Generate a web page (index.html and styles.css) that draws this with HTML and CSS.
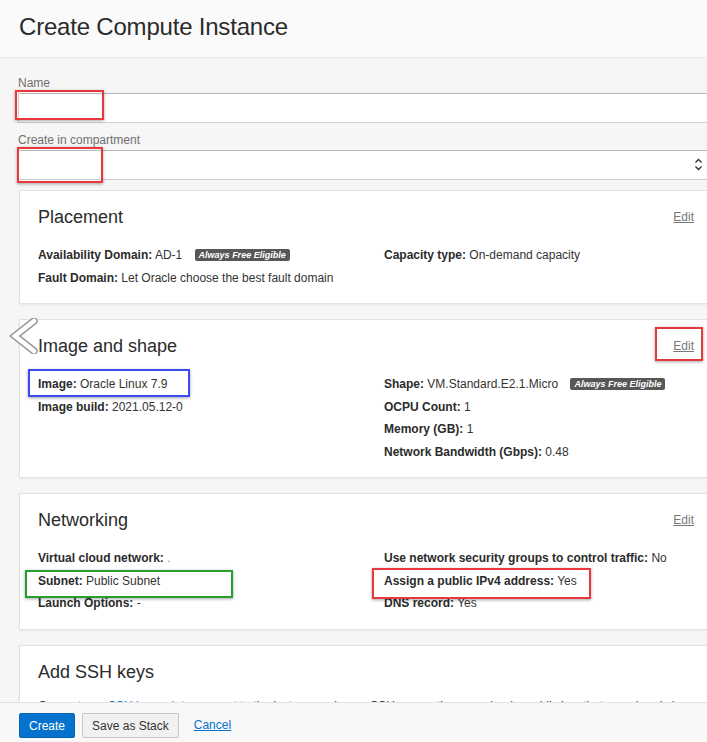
FILE: index.html
```html
<!DOCTYPE html>
<html lang="en">
<head>
<meta charset="utf-8">
<title>Create Compute Instance</title>
<link rel="stylesheet" href="styles.css">
</head>
<body>
<header class="page-header">
  <h1>Create Compute Instance</h1>
</header>

<main class="main">
  <label class="field-label">Name</label>
  <div class="field">
    <input class="text-input" type="text" value="">
    <span class="annot annot-red annot-name"></span>
  </div>

  <label class="field-label">Create in compartment</label>
  <div class="field">
    <div class="select-box">
      <svg class="select-arrows" width="9" height="15" viewBox="0 0 9 15"><path d="M1.5 5.5 L4.5 2.5 L7.5 5.5 M1.5 9.5 L4.5 12.5 L7.5 9.5" fill="none" stroke="#333" stroke-width="1.4"/></svg>
    </div>
    <span class="annot annot-red annot-comp"></span>
  </div>

  <section class="card">
    <div class="card-head">
      <h2>Placement</h2>
      <a class="edit" href="#">Edit</a>
    </div>
    <div class="card-body">
      <div class="col">
        <div class="row"><b>Availability Domain:</b> AD-1 <span class="badge">Always Free Eligible</span></div>
        <div class="row"><b>Fault Domain:</b> Let Oracle choose the best fault domain</div>
      </div>
      <div class="col">
        <div class="row"><b>Capacity type:</b> On-demand capacity</div>
      </div>
    </div>
  </section>

  <section class="card card-image">
    <svg class="chevron" width="30" height="36" viewBox="0 0 30 36"><polyline points="25,3 6,18 25,33" fill="none" stroke="#9a9a9a" stroke-width="7.5" stroke-linejoin="miter" stroke-linecap="round"/><polyline points="25,3 6,18 25,33" fill="none" stroke="#ffffff" stroke-width="4.5" stroke-linejoin="miter" stroke-linecap="round"/></svg>
    <div class="card-head">
      <h2>Image and shape</h2>
      <span class="edit-wrap"><a class="edit" href="#">Edit</a><span class="annot annot-red annot-edit"></span></span>
    </div>
    <div class="card-body">
      <div class="col">
        <div class="row row-annot"><b>Image:</b> Oracle Linux 7.9<span class="annot annot-blue annot-image"></span></div>
        <div class="row"><b>Image build:</b> 2021.05.12-0</div>
      </div>
      <div class="col">
        <div class="row"><b>Shape:</b> VM.Standard.E2.1.Micro <span class="badge">Always Free Eligible</span></div>
        <div class="row"><b>OCPU Count:</b> 1</div>
        <div class="row"><b>Memory (GB):</b> 1</div>
        <div class="row"><b>Network Bandwidth (Gbps):</b> 0.48</div>
      </div>
    </div>
  </section>

  <section class="card">
    <div class="card-head">
      <h2>Networking</h2>
      <a class="edit" href="#">Edit</a>
    </div>
    <div class="card-body">
      <div class="col">
        <div class="row"><b>Virtual cloud network:</b> <span class="faint">.</span></div>
        <div class="row row-annot"><b>Subnet:</b> Public Subnet<span class="annot annot-green annot-subnet"></span></div>
        <div class="row"><b>Launch Options:</b> -</div>
      </div>
      <div class="col">
        <div class="row"><b>Use network security groups to control traffic:</b> No</div>
        <div class="row row-annot"><b>Assign a public IPv4 address:</b> Yes<span class="annot annot-red annot-ipv4"></span></div>
        <div class="row"><b>DNS record:</b> Yes</div>
      </div>
    </div>
  </section>

  <section class="card card-ssh">
    <div class="card-head">
      <h2>Add SSH keys</h2>
    </div>
    <p class="ssh-text">Generate an <a href="#">SSH key pair</a> to connect to the instance using an SSH connection, or upload a public key that you already have.</p>
  </section>
</main>

<footer class="footer">
  <button class="btn btn-primary">Create</button>
  <button class="btn btn-default">Save as Stack</button>
  <a class="cancel" href="#">Cancel</a>
</footer>
</body>
</html>
```

FILE: styles.css
```css
* { box-sizing: border-box; }

html, body {
  margin: 0;
  padding: 0;
  height: 100%;
  overflow: hidden;
}

body {
  background: #f6f6f6;
  font-family: "Liberation Sans", Arial, sans-serif;
  color: #333;
  font-size: 12px;
}

.page-header {
  height: 58px;
  background: #fafafa;
  border-bottom: 1px solid #e6e6e6;
  padding: 0 0 3px 19px;
  display: flex;
  align-items: center;
}

.page-header h1 {
  margin: 0;
  font-size: 24px;
  font-weight: normal;
  color: #2b2b2b;
  letter-spacing: -0.2px;
}

.main {
  padding: 18px 0 60px 18px;
  margin-right: -6px;
}

.field-label {
  display: block;
  font-size: 12px;
  line-height: 14px;
  color: #6f6f6f;
  margin-bottom: 3px;
}

.field {
  position: relative;
  margin-bottom: 10px;
}

.text-input,
.select-box {
  display: block;
  width: 100%;
  height: 30px;
  background: #fff;
  border: 1px solid #cfcfcf;
  border-top-color: #b9b9b9;
  border-radius: 0;
  padding: 0 8px;
  font: inherit;
}

.select-box {
  position: relative;
}

.select-arrows {
  position: absolute;
  right: 9px;
  top: 6px;
}

.annot {
  position: absolute;
  border: 2px solid #e8383e;
  box-shadow: 0 1px 3px rgba(0, 0, 0, 0.35);
  pointer-events: none;
}

.annot-blue { border-color: #3a4cf0; }
.annot-green { border-color: #2a9d2f; }

.annot-name { left: -3px; top: -3px; width: 89px; height: 30px; }
.annot-comp { left: -1px; top: -3px; width: 86px; height: 36px; }

.card {
  position: relative;
  background: #fff;
  border: 1px solid #e2e2e2;
  box-shadow: 0 1px 2px rgba(0, 0, 0, 0.06);
  margin: 0 0 15px 1px;
  padding: 15px 18px 14px;
}

.main > .field + .card { margin-top: 1px; }

.card-head {
  display: flex;
  justify-content: space-between;
  align-items: center;
}

.card-head h2 {
  margin: 0;
  font-size: 18px;
  line-height: 22px;
  font-weight: normal;
  color: #2b2b2b;
}

.edit {
  color: #777;
  font-size: 12px;
  text-decoration: underline;
}

.edit-wrap { position: relative; }
.annot-edit { left: -18px; top: -12px; width: 48px; height: 34px; }

.card-body {
  margin-top: 16px;
  display: grid;
  grid-template-columns: 346px 1fr;
}

.row {
  line-height: 22.5px;
  white-space: nowrap;
  color: #333;
}

.row b { color: #2b2b2b; }

.row-annot { position: relative; }

.annot-image { left: -10px; top: -4px; width: 162px; height: 28px; }
.annot-subnet { left: -13px; top: 0px; width: 208px; height: 28px; }
.annot-ipv4 { left: -12px; top: -2px; width: 219px; height: 31px; }

.badge {
  display: inline-block;
  margin-left: 9px;
  background: #575757;
  color: #fff;
  font-size: 9px;
  font-style: italic;
  font-weight: bold;
  line-height: 12px;
  padding: 0 4px;
  border-radius: 2px;
  vertical-align: 1px;
}

.faint { color: #999; }

.chevron {
  position: absolute;
  left: -11px;
  top: -2px;
}

.ssh-text {
  margin: 13px 0 0;
  line-height: 20px;
  color: #333;
  white-space: nowrap;
}

.ssh-text a { color: #0572ce; text-decoration: none; }

.footer {
  position: fixed;
  left: 0;
  right: 0;
  bottom: 0;
  height: 40px;
  background: #f8f8f8;
  border-top: 1px solid #e2e2e2;
  padding: 10px 0 0 19px;
  display: flex;
  align-items: flex-start;
  gap: 7px;
}

.btn {
  height: 25px;
  font-family: inherit;
  font-size: 12px;
  border-radius: 2px;
  padding: 0 9px;
  white-space: nowrap;
  cursor: pointer;
}

.btn-primary {
  background: #0572ce;
  color: #fff;
  border: 1px solid #0566b8;
}

.btn-default {
  background: #f1f1f1;
  color: #333;
  border: 1px solid #c6c6c6;
}

.cancel {
  margin-left: 8px;
  color: #0572ce;
  font-size: 12px;
  line-height: 25px;
  text-decoration: underline;
}
```
